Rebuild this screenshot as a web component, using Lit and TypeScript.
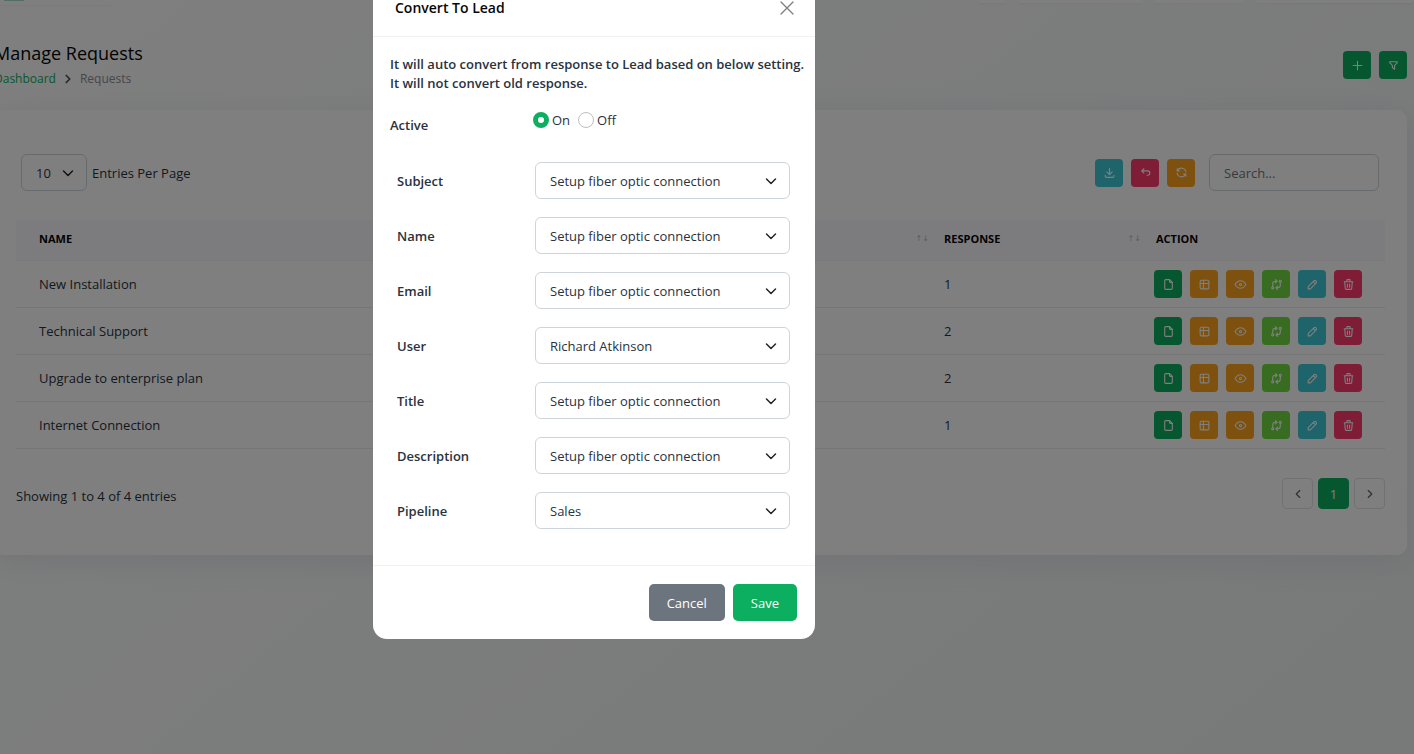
import { LitElement, html, css, svg } from "lit";
import { customElement, property, state } from "lit/decorators.js";
import { classMap } from "lit/directives/class-map.js";

const ICONS: Record<string, unknown> = {
  plus: svg`<path d="M12 4v16M4 12h16"/>`,
  filter: svg`<path d="M5.500 5h13a1 1 0 0 1 .5 1.500L14 12v7l-4-3v-4L5 6.500a1 1 0 0 1 .5-1.500"/>`,
  download: svg`<path d="M4 17v2a2 2 0 0 0 2 2h12a2 2 0 0 0 2-2v-2M7 11l5 5 5-5M12 4v12"/>`,
  back: svg`<path d="M9 13L5 9l4-4M5 9h11a4 4 0 0 1 0 8h-1"/>`,
  refresh: svg`<path d="M20 11A8.100 8.100 0 0 0 4.500 9M4 5v4h4M4 13a8.100 8.100 0 0 0 15.500 2M20 19v-4h-4"/>`,
  file: svg`<path d="M14 3v4a1 1 0 0 0 1 1h4"/><path d="M17 21H7a2 2 0 0 1-2-2V5a2 2 0 0 1 2-2h7l5 5v11a2 2 0 0 1-2 2z"/>`,
  table: svg`<rect x="4" y="4" width="16" height="16" rx="2"/><path d="M4 10h16M10 4v16"/>`,
  eye: svg`<circle cx="12" cy="12" r="2"/><path d="M22 12c-2.667 4.667-6 7-10 7s-7.333-2.333-10-7c2.667-4.667 6-7 10-7s7.333 2.333 10 7"/>`,
  exchange: svg`<circle cx="5" cy="18" r="2"/><circle cx="19" cy="6" r="2"/><path d="M19 8v5a5 5 0 0 1-5 5h-3l3-3M14 21l-3-3M5 16v-5a5 5 0 0 1 5-5h3l-3-3M10 9l3-3"/>`,
  pencil: svg`<path d="M4 20h4L18.500 9.500a2.828 2.828 0 0 0-4-4L4 16v4M13.500 6.500l4 4"/>`,
  trash: svg`<path d="M4 7h16M10 11v6M14 11v6M5 7l1 12a2 2 0 0 0 2 2h8a2 2 0 0 0 2-2l1-12M9 7V4a1 1 0 0 1 1-1h4a1 1 0 0 1 1 1v3"/>`,
  down: svg`<path d="M3 8l9 9 9-9"/>`,
  left: svg`<path d="M15 6l-6 6 6 6"/>`,
  right: svg`<path d="M9 6l6 6-6 6"/>`,
  close: svg`<path d="M3 3l18 18M21 3L3 21"/>`,
};

@customElement("ui-icon")
class UiIcon extends LitElement {
  @property() name = "";
  static styles = css`
    :host { display: inline-flex; width: 14px; height: 14px; }
    .glyph {
      width: 100%; height: 100%; fill: none; stroke: currentColor;
      stroke-width: var(--icon-stroke, 2); stroke-linecap: round; stroke-linejoin: round;
    }
  `;
  render() {
    return html`<svg class="glyph" viewBox="0 0 24 24" aria-hidden="true">${ICONS[this.name]}</svg>`;
  }
}

const ROWS = [
  { name: "New Installation", response: 1 },
  { name: "Technical Support", response: 2 },
  { name: "Upgrade to enterprise plan", response: 2 },
  { name: "Internet Connection", response: 1 },
];

const ACTIONS = [
  { icon: "file", tone: "green", label: "Copy form" },
  { icon: "table", tone: "amber", label: "Responses" },
  { icon: "eye", tone: "amber", label: "View" },
  { icon: "exchange", tone: "lime", label: "Convert" },
  { icon: "pencil", tone: "cyan", label: "Edit" },
  { icon: "trash", tone: "pink", label: "Delete" },
];

const FIELDS = [
  ["Subject", "Setup fiber optic connection"],
  ["Name", "Setup fiber optic connection"],
  ["Email", "Setup fiber optic connection"],
  ["User", "Richard Atkinson"],
  ["Title", "Setup fiber optic connection"],
  ["Description", "Setup fiber optic connection"],
  ["Pipeline", "Sales"],
];

@customElement("app-root")
class AppRoot extends LitElement {
  @state() active = "on";

  static styles = css`
    :host {
      display: block;
      font-family: "Open Sans", "Noto Sans", sans-serif;
      font-size: 13px;
      line-height: 20px;
      color: #293240;
    }
    * { box-sizing: border-box; }
    button, select, input { font: inherit; color: inherit; margin: 0; }
    button { cursor: pointer; border: 0; padding: 0; }
    h1, h2, p { margin: 0; }

    .shell { position: relative; min-height: 100vh; overflow: hidden; }
    .page {
      min-height: 100vh;
      margin-left: -6px;
      padding-right: 7px;
      background: linear-gradient(141deg, #fefefe 3%, #f0f4f3 100%);
    }

    .topbar { display: flex; align-items: flex-start; gap: 12px; height: 38px; margin-right: -7px; }
    .tab { height: 3px; background: #ffffff; border-radius: 0 0 6px 6px; box-shadow: 0 1px 2px rgba(0, 0, 0, 0.04); }
    .tab-menu { width: 119px; height: 5px; margin-right: auto; padding-left: 10px; }
    .tab-mark { width: 20px; height: 1px; background: #a6e2c5; }
    .tab-s { width: 28px; }
    .tab-m { width: 90px; }
    .tab-l { width: 124px; }
    .tab-xl { width: 158px; }

    .heading { display: flex; justify-content: space-between; align-items: flex-end; }
    .title { font-size: 18px; line-height: 30px; font-weight: 500; color: #060606; }
    .crumbs { display: flex; align-items: center; font-size: 12px; line-height: 21px; gap: 5px; color: #8a8f96; }
    .crumbs a { color: #0caf60; text-decoration: none; }
    .crumbs ui-icon { color: #4a5058; --icon-stroke: 3; }
    .tools { display: flex; gap: 8px; }
    .heading .tools { margin-bottom: 10px; }

    .icon-btn {
      display: inline-flex; align-items: center; justify-content: center;
      width: 28px; height: 28px; border-radius: 4px; color: #ffffff;
    }
    .icon-btn ui-icon { width: 13px; height: 13px; }
    .green { background: #0caf60; }
    .amber { background: #ffa21d; }
    .lime { background: #6fd943; }
    .cyan { background: #3ec9d6; }
    .pink { background: #ff3a6e; }

    .card {
      margin-top: 21px;
      padding: 44px 22px 46px;
      background: #ffffff;
      border-radius: 10px;
      box-shadow: 0 6px 30px rgba(182, 186, 203, 0.3);
    }
    .toolbar { display: flex; align-items: center; gap: 14px; padding: 0 6px 0 5px; }
    .per-page { display: flex; align-items: center; gap: 5px; margin-right: auto; }

    .picker { display: grid; align-items: center; }
    .picker select, .picker ui-icon { grid-area: 1 / 1; }
    .picker ui-icon { width: 12px; height: 12px; justify-self: end; margin-right: 13px; pointer-events: none; color: #212529; --icon-stroke: 3; }
    select {
      appearance: none; width: 100%; height: 37px; padding: 0 34px 0 14px;
      border: 1px solid #ced4da; border-radius: 6px; background: transparent;
    }
    .per-page .picker { width: 66px; }
    .per-page select { padding-right: 0; }
    .search {
      width: 170px; height: 37px; padding: 0 14px;
      border: 1px solid #ced4da; border-radius: 6px; background: transparent;
    }
    .search::placeholder { color: #6c757d; opacity: 1; }

    .grid { width: 100%; margin-top: 29px; border-collapse: separate; border-spacing: 0; table-layout: fixed; }
    .grid th {
      height: 41px; padding: 0 1px 3px 14px; text-align: left; background: #f8f9fd;
      font-size: 11px; font-weight: 700; color: #060606; border-bottom: 1px solid #f1f1f1;
    }
    .grid td { height: 47px; padding: 0 0 0 14px; border-bottom: 1px solid #ececec; }
    .grid th:first-child, .grid td:first-child { padding-left: 23px; }
    .grid td:last-child { padding-left: 12px; }
    .col-response { width: 212px; }
    .col-action { width: 243px; }
    .th { display: flex; justify-content: space-between; }
    .sort { color: #b4b4b8; font-family: "DejaVu Sans", sans-serif; font-weight: 400; font-size: 8px; }
    .grid .tools { height: 28px; }

    .foot { display: flex; justify-content: space-between; margin-top: 29px; }
    .foot p { padding-top: 8px; }
    .pager { display: flex; gap: 5px; }
    .pager button {
      display: flex; align-items: center; justify-content: center; width: 31px; height: 31px;
      border: 1px solid #dee2e6; border-radius: 4px; background: transparent; color: #5b6068;
    }
    .pager .current { background: #0caf60; border-color: #0caf60; color: #ffffff; }

    .overlay {
      position: absolute; inset: 0; display: flex; justify-content: center; align-items: flex-start;
      padding-right: 226px; background: rgba(0, 0, 0, 0.5);
    }
    .dialog { width: 442px; margin-top: -20px; background: #ffffff; border-radius: 14px; }
    .dialog-head {
      display: flex; align-items: center; justify-content: space-between; height: 57px;
      padding: 0 20px 0 22px; border-bottom: 1px solid #f1f1f1;
    }
    .dialog-title { font-size: 14px; font-weight: 600; color: #060606; }
    .close { display: flex; background: none; color: #7f7f7f; --icon-stroke: 2; }
    .close ui-icon { width: 16px; height: 16px; }
    .dialog-body { padding: 18px 8px 36px 17px; }
    .note { font-weight: 600; line-height: 19px; }
    .active-row { display: grid; grid-template-columns: 143px 1fr; margin-top: 17px; }
    .label { font-weight: 600; }
    .active-row .label { padding-top: 5px; }
    .radios { display: flex; align-items: flex-start; gap: 8px; }
    .radio { display: flex; align-items: center; gap: 3px; }
    .radio input {
      appearance: none; width: 16px; height: 16px; border: 1px solid #bfbfbf; border-radius: 50%; background: #ffffff;
    }
    .radio input:checked { border: 5px solid #0caf60; }
    .fields { display: grid; gap: 18px; margin-top: 27px; padding: 0 17px 0 7px; }
    .field { display: grid; grid-template-columns: 138px 1fr; align-items: center; }
    .dialog-foot {
      display: flex; justify-content: flex-end; gap: 8px; padding: 18px; border-top: 1px solid #f1f1f1;
    }
    .btn { height: 37px; padding: 0 18px; border-radius: 5px; color: #ffffff; }
    .grey { background: #6c757d; }
  `;

  private picker(id: string, value: string) {
    return html`<div class="picker">
      <select id=${id}><option>${value}</option></select>
      <ui-icon name="down"></ui-icon>
    </div>`;
  }

  private iconButton(icon: string, tone: string, label: string) {
    return html`<button class=${classMap({ "icon-btn": true, [tone]: true })} aria-label=${label}>
      <ui-icon name=${icon}></ui-icon>
    </button>`;
  }

  private radio(value: string, label: string) {
    return html`<label class="radio">
      <input type="radio" name="active" .value=${value} .checked=${this.active === value}
        @change=${() => (this.active = value)} />${label}
    </label>`;
  }

  render() {
    return html`<div class="shell">
      <main class="page">
        <div class="topbar">
          <div class="tab tab-menu"><div class="tab-mark"></div></div>
          <div class="tab tab-s"></div>
          <div class="tab tab-l"></div>
          <div class="tab tab-m"></div>
          <div class="tab tab-xl"></div>
        </div>
        <div class="heading">
          <div>
            <h1 class="title">Manage Requests</h1>
            <nav class="crumbs"><a href="#">Dashboard</a><ui-icon name="right"></ui-icon><span>Requests</span></nav>
          </div>
          <div class="tools">
            ${this.iconButton("plus", "green", "Create")}
            ${this.iconButton("filter", "green", "Filter")}
          </div>
        </div>

        <section class="card">
          <div class="toolbar">
            <div class="per-page">
              ${this.picker("per-page", "10")}
              <label for="per-page">Entries Per Page</label>
            </div>
            <div class="tools">
              ${this.iconButton("download", "cyan", "Export")}
              ${this.iconButton("back", "pink", "Reset")}
              ${this.iconButton("refresh", "amber", "Reload")}
            </div>
            <input class="search" type="search" placeholder="Search..." aria-label="Search" />
          </div>

          <table class="grid">
            <thead>
              <tr>
                <th><div class="th">NAME<span class="sort">↑↓</span></div></th>
                <th class="col-response"><div class="th">RESPONSE<span class="sort">↑↓</span></div></th>
                <th class="col-action">ACTION</th>
              </tr>
            </thead>
            <tbody>
              ${ROWS.map((row) => html`<tr>
                <td>${row.name}</td>
                <td>${row.response}</td>
                <td><div class="tools">${ACTIONS.map((a) => this.iconButton(a.icon, a.tone, a.label))}</div></td>
              </tr>`)}
            </tbody>
          </table>

          <div class="foot">
            <p>Showing 1 to 4 of 4 entries</p>
            <div class="pager">
              <button aria-label="Previous"><ui-icon name="left"></ui-icon></button>
              <button class="current">1</button>
              <button aria-label="Next"><ui-icon name="right"></ui-icon></button>
            </div>
          </div>
        </section>
      </main>

      <div class="overlay">
        <form class="dialog" role="dialog" aria-labelledby="dialog-title" @submit=${(e: Event) => e.preventDefault()}>
          <header class="dialog-head">
            <h2 class="dialog-title" id="dialog-title">Convert To Lead</h2>
            <button class="close" type="button" aria-label="Close"><ui-icon name="close"></ui-icon></button>
          </header>
          <div class="dialog-body">
            <p class="note">It will auto convert from response to Lead based on below setting.<br />It will not convert old response.</p>
            <div class="active-row" role="radiogroup" aria-labelledby="active-label">
              <span class="label" id="active-label">Active</span>
              <div class="radios">${this.radio("on", "On")}${this.radio("off", "Off")}</div>
            </div>
            <div class="fields">
              ${FIELDS.map(([label, value]) => html`<div class="field">
                <label class="label" for=${label}>${label}</label>
                ${this.picker(label, value)}
              </div>`)}
            </div>
          </div>
          <footer class="dialog-foot">
            <button class="btn grey" type="button">Cancel</button>
            <button class="btn green" type="submit">Save</button>
          </footer>
        </form>
      </div>
    </div>`;
  }
}
